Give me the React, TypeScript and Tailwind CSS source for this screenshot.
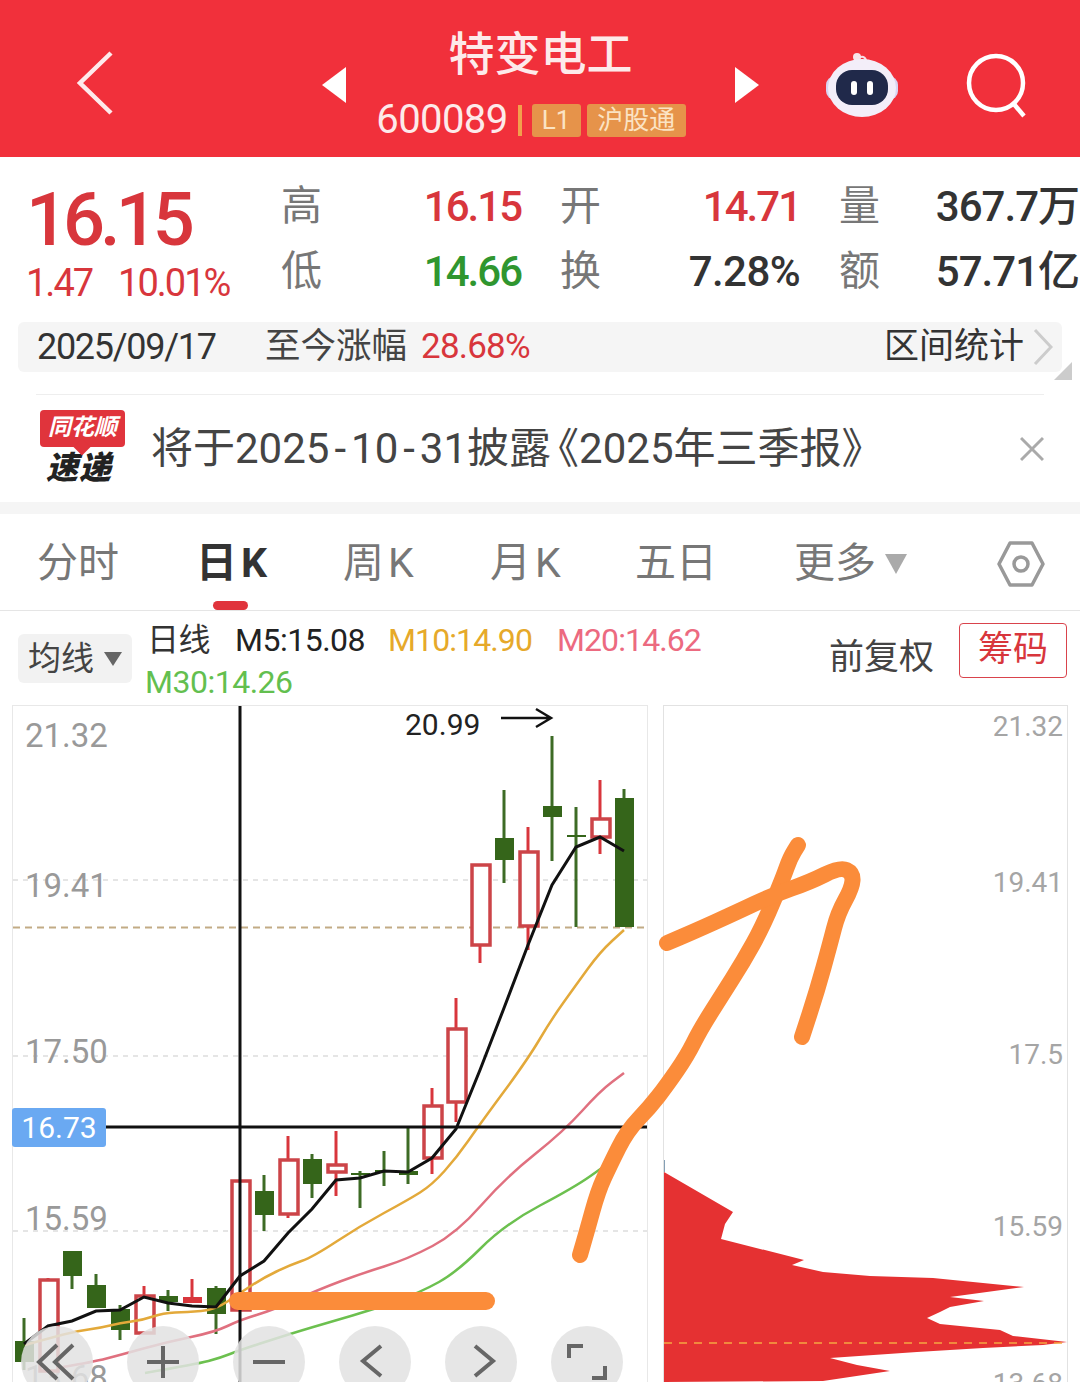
const RED = '#d8363c';
const GREEN = '#35651a';

// x, wick top, wick bottom, body top, body bottom, half width, kind
const candles: [number, number, number, number, number, number, 'g' | 'r' | 's'][] = [
  [24, 1318, 1370, 1341, 1362, 9, 'g'],
  [48, 1278, 1372, 1279, 1372, 9, 'r'],
  [72, 1251, 1289, 1251, 1276, 9, 'g'],
  [96, 1274, 1308, 1285, 1308, 9, 'g'],
  [120, 1305, 1340, 1309, 1330, 9, 'g'],
  [144, 1286, 1334, 1295, 1334, 9, 'r'],
  [168, 1290, 1311, 1296, 1302, 9, 'g'],
  [192, 1279, 1303, 1297, 1303, 9, 's'],
  [216, 1286, 1334, 1288, 1314, 9, 'g'],
  [240, 1180, 1311, 1180, 1311, 9, 'r'],
  [264, 1175, 1231, 1191, 1215, 9, 'g'],
  [288, 1136, 1218, 1159, 1215, 9, 'r'],
  [312, 1154, 1198, 1159, 1184, 9, 'g'],
  [336, 1131, 1196, 1164, 1173, 9, 'r'],
  [360, 1171, 1208, 1173, 1175, 9, 'g'],
  [384, 1151, 1186, 1170, 1172, 9, 'g'],
  [408, 1128, 1184, 1171, 1175, 9, 'g'],
  [432, 1088, 1174, 1105, 1159, 9, 'r'],
  [456, 998, 1122, 1028, 1103, 9, 'r'],
  [480, 864, 963, 864, 946, 9, 'r'],
  [504, 790, 883, 838, 860, 9, 'g'],
  [528, 827, 950, 851, 927, 9, 'r'],
  [552, 736, 861, 806, 817, 9, 'g'],
  [576, 807, 927, 835, 837, 9, 'g'],
  [600, 780, 854, 818, 838, 9, 'r'],
  [624, 789, 927, 798, 927, 9, 'g'],
];

const m5 = '24,1344 48,1326 72,1321 96,1311 120,1310 144,1297 168,1303 192,1306 216,1307 240,1276 264,1261 288,1233 312,1209 336,1180 360,1178 384,1171 408,1172 432,1158 456,1129 480,1070 504,1008 528,945 552,885 576,847 600,837 624,851';
const m10 = '25,1345 50,1338 77,1331 100,1328 120,1323 143,1320 163,1313 187,1312 215,1310 240,1293 263,1278 290,1265 313,1257 360,1226 408,1200 432,1185 457,1157 480,1124 528,1059 551,1020 576,985 600,952 624,930';
const m20 = '63,1367 93,1362 120,1355 167,1342 215,1332 240,1320 273,1310 320,1289 360,1274 408,1259 457,1233 505,1178 564,1131 600,1091 624,1073';
const m30 = '145,1373 197,1364 220,1358 240,1350 293,1333 330,1322 375,1309 421,1292 457,1272 505,1224 575,1187 606,1165';
const profile = '664,1172 733,1212 725,1224 721,1239 804,1260 792,1265 823,1272 870,1276 933,1278 1024,1287 950,1297 984,1301 950,1307 940,1312 927,1318 940,1324 1000,1330 1013,1336 1067,1342 1043,1345 983,1348 917,1352 830,1358 857,1365 890,1371 823,1381 664,1382';
const strokeB = '580,1255 587,1231 598,1191 610,1165 627,1131 650,1107 667,1085 687,1056 700,1030 722,995 743,962 763,926 783,878 790,858 798,845';
const strokeC = '667,943 693,932 737,912 773,895 810,882 840,867 853,873 852,888 838,913 830,944 817,991 802,1037';

// rounds a point list into a path through the midpoints
const smooth = (points: string) => {
  const p = points.split(' ').map((s) => s.split(',').map(Number));
  let d = `M${p[0][0]} ${p[0][1]}`;
  for (let i = 1; i < p.length - 1; i++) {
    d += ` Q${p[i][0]} ${p[i][1]} ${(p[i][0] + p[i + 1][0]) / 2} ${(p[i][1] + p[i + 1][1]) / 2}`;
  }
  const last = p[p.length - 1];
  return `${d} L${last[0]} ${last[1]}`;
};

const leftAxis: [string, number][] = [['21.32', 747], ['19.41', 897], ['17.50', 1063], ['15.59', 1230], ['13.68', 1389]];
const rightAxis: [string, number][] = [['21.32', 736], ['19.41', 892], ['17.5', 1064], ['15.59', 1236], ['13.68', 1393]];
const tabs: [string, string, string][] = [
  ['分时', 'w-[159px]', 'text-[#777]'],
  ['日K', 'w-[147px]', 'text-[#333] font-bold tracking-[4px]'],
  ['周K', 'w-[147px]', 'text-[#777] tracking-[4px]'],
  ['月K', 'w-[145px]', 'text-[#777] tracking-[4px]'],
  ['五日', 'w-[159px]', 'text-[#777]'],
];

const Header = () => (
  <header className="flex h-[157px] items-center bg-[#f1303b] pl-[76px] text-white">
    <svg width="38" height="66" viewBox="0 0 38 66" className="mt-[8px]">
      <path d="M35 3 4 33l31 30" fill="none" stroke="#fff" strokeWidth="4.5" opacity="0.9" />
    </svg>
    <svg width="24" height="36" viewBox="0 0 24 36" className="mt-[13px] ml-[208px]">
      <path d="M24 0v36L0 18z" fill="#fff" />
    </svg>
    <div className="flex w-[389px] flex-col items-center self-start pt-[29px]">
      <div className="text-[46px] leading-[50px] font-medium text-[#fdeaea]">特变电工</div>
      <div className="mt-[21px] mr-[19px] flex items-center">
        <span className="text-[40px] leading-[40px] tracking-[-0.6px] text-[#fdeaea]">600089</span>
        <span className="mx-[10px] h-[31px] w-[4px] bg-[#f2a04c]" />
        <span className="flex h-[33px] w-[49px] items-center justify-center rounded-[3px] bg-[#e6934a] text-[26px] text-[#fbe3c4]">L1</span>
        <span className="ml-[6px] flex h-[33px] w-[99px] items-center justify-center rounded-[3px] bg-[#e6934a] text-[26px] text-[#fbe3c4]">沪股通</span>
      </div>
    </div>
    <svg width="24" height="36" viewBox="0 0 24 36" className="mt-[13px]">
      <path d="M0 0v36l24-18z" fill="#fff" />
    </svg>
    <svg width="76" height="70" viewBox="0 0 76 70" className="mt-[12px] ml-[65px]">
      <path d="M35 8c4-3 8 0 7 6" fill="none" stroke="#f6dfe6" strokeWidth="2" />
      <circle cx="33" cy="7" r="4" fill="#f8e4ea" />
      <rect x="2" y="26" width="72" height="24" rx="9" fill="#d9d4f2" />
      <ellipse cx="38" cy="38" rx="34" ry="29" fill="#f3eef9" />
      <rect x="12" y="20" width="52" height="35" rx="16" fill="#20294a" />
      <rect x="27" y="31" width="6" height="14" rx="3" fill="#fff" />
      <rect x="43" y="31" width="6" height="14" rx="3" fill="#fff" />
    </svg>
    <svg width="64" height="66" viewBox="0 0 64 66" className="mt-[15px] ml-[66px]">
      <circle cx="30" cy="30" r="27" fill="none" stroke="#fff" strokeWidth="4.5" />
      <path d="m47 50 11 13" fill="none" stroke="#fff" strokeWidth="4.5" />
    </svg>
  </header>
);

const Cell = ({ label, value, color }: { label: string; value: string; color: string }) => (
  <div className="flex h-[65px] items-center justify-between whitespace-nowrap">
    <span className="text-[41px] text-[#777]">{label}</span>
    <span className={`text-[42px] font-medium ${color}`}>{value}</span>
  </div>
);

const Quote = () => (
  <section className="flex h-[165px] items-start pt-[17px]">
    <div className="w-[281px] pl-[26px] whitespace-nowrap text-[#d8363c]">
      <div className="h-[82px] pt-[2px] text-[74px] leading-[88px] font-medium tracking-[-5px]">16.15</div>
      <div className="mt-[7px] flex h-[40px] items-center text-[38px] tracking-[-2px]">
        <span>1.47</span>
        <span className="ml-[26px]">10.01%</span>
      </div>
    </div>
    <div className="grid grid-cols-[240px_240px_240px] gap-x-[39px]">
      <Cell label="高" value="16.15" color="text-[#d8363c] tracking-[-2px]" />
      <Cell label="开" value="14.71" color="text-[#d8363c] tracking-[-2px]" />
      <Cell label="量" value="367.7万" color="text-[#333] tracking-[-1px]" />
      <Cell label="低" value="14.66" color="text-[#2f962f] tracking-[-2px]" />
      <Cell label="换" value="7.28%" color="text-[#333] tracking-[-0.6px]" />
      <Cell label="额" value="57.71亿" color="text-[#333] tracking-[-1px]" />
    </div>
  </section>
);

const RangeBar = () => (
  <div className="relative mx-[18px] flex h-[50px] items-center rounded-[6px] bg-[#f5f5f5] pl-[19px] whitespace-nowrap">
    <span className="w-[228px] text-[36px] tracking-[-1.3px] text-[#333]">2025/09/17</span>
    <span className="text-[35.5px] text-[#444]">至今涨幅</span>
    <span className="ml-[14px] text-[35px] tracking-[-0.8px] text-[#d8363c]">28.68%</span>
    <span className="ml-auto text-[35px] text-[#333]">区间统计</span>
    <svg width="20" height="36" viewBox="0 0 20 36" className="mr-[9px] ml-[9px]">
      <path d="m2 1 16 17L2 35" fill="none" stroke="#ccc" strokeWidth="3" />
    </svg>
    <svg width="18" height="18" viewBox="0 0 18 18" className="absolute top-[40px] right-[-10px]">
      <path d="M18 0v18H0z" fill="#ccc" />
    </svg>
  </div>
);

const News = () => (
  <section className="flex h-[107px] items-center pr-[36px] pl-[37px]">
    <div className="flex w-[114px] flex-col items-start">
      <div className="relative ml-[3px] flex h-[37px] w-[85px] items-center justify-center rounded-[4px] bg-[#e0343c] text-[23px] font-bold text-white italic">
        同花顺
        <span className="absolute bottom-[-6px] left-[36px] h-[12px] w-[12px] rotate-45 bg-[#e0343c]" />
      </div>
      <div className="mt-[3px] ml-[9px] text-[32px] leading-[37px] font-black tracking-[1px] text-[#222] italic">速递</div>
    </div>
    <p className="text-[42px] whitespace-nowrap text-[#444]">
      将于2025<span className="px-[5px]">-</span>10<span className="px-[5px]">-</span>31披露<span className="-ml-[14px]">《</span>2025年三季报》
    </p>
    <svg width="24" height="26" viewBox="0 0 24 26" className="ml-auto">
      <path d="m1 2 22 22M23 2 1 24" stroke="#aaa" strokeWidth="3" />
    </svg>
  </section>
);

const Tabs = () => (
  <nav className="relative flex h-[97px] items-center border-b border-[#e5e5e5] pt-[4px] pl-[37px] text-[41px] whitespace-nowrap">
    {tabs.map(([label, width, color]) => (
      <span key={label} className={`${width} ${color}`}>{label}</span>
    ))}
    <span className="text-[41px] text-[#777]">更多</span>
    <svg width="22" height="20" viewBox="0 0 22 20" className="ml-[9px]">
      <path d="M0 0h22L11 20z" fill="#aaa" />
    </svg>
    <svg width="48" height="48" viewBox="0 0 48 48" className="ml-[90px]">
      <path d="M13 3h22l11 21-11 21H13L2 24z" fill="none" stroke="#999" strokeWidth="3.5" strokeLinejoin="round" />
      <circle cx="24" cy="24" r="7" fill="none" stroke="#999" strokeWidth="3.5" />
    </svg>
    <span className="absolute bottom-0 left-[213px] h-[9px] w-[35px] rounded-[5px] bg-[#e0343c]" />
  </nav>
);

const MaRow = () => (
  <section className="flex h-[94px] items-start whitespace-nowrap">
    <div className="mt-[23px] ml-[18px] flex h-[49px] w-[114px] items-center rounded-[6px] bg-[#f2f2f2] pl-[10px]">
      <span className="text-[33px] text-[#444]">均线</span>
      <svg width="18" height="14" viewBox="0 0 18 14" className="ml-[10px]">
        <path d="M0 0h18L9 14z" fill="#666" />
      </svg>
    </div>
    <div className="mt-[8px] ml-[15px] w-[614px] text-[32px] leading-[42px] tracking-[-0.5px]">
      <div className="flex">
        <span className="text-[#333]">日线</span>
        <span className="ml-[25px] text-[#222]">M5:15.08</span>
        <span className="ml-[23px] tracking-[-0.9px] text-[#e6a92a]">M10:14.90</span>
        <span className="ml-[25px] tracking-[-0.9px] text-[#ec6a80]">M20:14.62</span>
      </div>
      <div className="-ml-[2px] text-[#63bf4f]">M30:14.26</div>
    </div>
    <span className="mt-[21px] ml-[68px] text-[35px] text-[#444]">前复权</span>
    <button className="mt-[12px] ml-[25px] flex h-[55px] w-[108px] items-center justify-center rounded-[4px] border border-[#d9434c] text-[35px] text-[#d8363c]">筹码</button>
  </section>
);

const LeftChart = () => (
  <div className="h-[677px] w-[636px] border-x border-t border-[#e8e8e8]">
    <svg width="634" height="676" viewBox="13 706 634 676" className="block">
      {[880, 1056, 1231].map((y) => (
        <line key={y} x1="13" x2="647" y1={y} y2={y} stroke="#ddd" strokeWidth="1.5" strokeDasharray="5 5" />
      ))}
      <line x1="13" x2="647" y1="927.5" y2="927.5" stroke="#c2ab85" strokeWidth="2" strokeDasharray="7 5" />
      {leftAxis.map(([label, y]) => (
        <text key={label} x="25" y={y} fontSize="33" fill="#999">{label}</text>
      ))}
      {candles.map(([x, wt, wb, bt, bb, hw, kind]) => {
        const color = kind === 'g' ? GREEN : RED;
        return (
          <g key={x}>
            <line x1={x} x2={x} y1={wt} y2={wb} stroke={kind === 'g' ? '#3d6b25' : RED} strokeWidth="3" />
            {kind === 'r' ? (
              <rect x={x - hw + 1} y={bt + 1} width={hw * 2} height={bb - bt - 2} fill="#fff" stroke="#cc4448" strokeWidth="3.5" />
            ) : (
              <rect x={x - hw} y={bt} width={hw * 2 + 1} height={bb - bt} fill={color} />
            )}
          </g>
        );
      })}
      <path d={smooth(m30)} fill="none" stroke="#6cc04f" strokeWidth="2.5" />
      <path d={smooth(m20)} fill="none" stroke="#e0707f" strokeWidth="2.5" />
      <path d={smooth(m10)} fill="none" stroke="#e3a93a" strokeWidth="2.5" />
      <polyline points={m5} fill="none" stroke="#111" strokeWidth="3" />
      <line x1="240" x2="240" y1="706" y2="1382" stroke="#111" strokeWidth="3" />
      <line x1="106" x2="647" y1="1127" y2="1127" stroke="#111" strokeWidth="3" />
      <text x="405" y="735" fontSize="30" fill="#222">20.99</text>
      <path d="M501 718h50m-15-9 15 9-15 9" fill="none" stroke="#111" strokeWidth="2.5" />
    </svg>
  </div>
);

const RightChart = () => (
  <div className="h-[677px] w-[405px] border-x border-t border-[#e2e2e2]">
    <svg width="403" height="676" viewBox="664 706 403 676" className="block">
      <polygon points={profile} fill="#e53132" />
      <line x1="664" x2="664" y1="1160" y2="1172" stroke="#5b7f9c" strokeWidth="1.5" />
      <line x1="664" x2="1067" y1="1343" y2="1343" stroke="#f5a742" strokeWidth="1.5" strokeDasharray="8 7" />
      {rightAxis.map(([label, y]) => (
        <text key={label} x="1063" y={y} fontSize="28" fill="#a5a5a5" textAnchor="end">{label}</text>
      ))}
    </svg>
  </div>
);

const Scribble = () => (
  <svg width="1080" height="677" viewBox="0 705 1080 677" className="pointer-events-none absolute top-0 left-0">
    <g fill="none" stroke="#fb8c3a" strokeLinecap="round" strokeLinejoin="round">
      <path d="M238 1301H486" strokeWidth="18" />
      <path d={smooth(strokeB)} strokeWidth="16" />
      <path d={smooth(strokeC)} strokeWidth="16" />
    </g>
  </svg>
);

const ChartButtons = () => (
  <div className="absolute top-[621px] left-[21px] flex gap-[34px]">
    {[
      'M36 19 18 36l18 17M52 19 34 36l18 17',
      'M36 20v32M20 36h32',
      'M20 36h32',
      'M42 20 24 35l18 15',
      'M30 20l18 15-18 15',
      'M18 32V20h14M54 40v12H41',
    ].map((d) => (
      <div key={d} className="h-[72px] w-[72px] rounded-full bg-[#e2e2e2]/85">
        <svg width="72" height="72" viewBox="0 0 72 72">
          <path d={d} fill="none" stroke="#666" strokeWidth="4" />
        </svg>
      </div>
    ))}
  </div>
);

const App = () => {
  return (
    <div className="h-[1382px] w-[1080px] overflow-hidden bg-white font-['Roboto','Noto_Sans_CJK_SC',sans-serif]">
      <Header />
      <Quote />
      <RangeBar />
      <div className="mx-[36px] mt-[22px] h-px bg-[#eee]" />
      <News />
      <div className="h-[12px] bg-[#f5f5f5]" />
      <Tabs />
      <MaRow />
      <div className="relative flex gap-[15px] pl-[12px]">
        <LeftChart />
        <RightChart />
        <Scribble />
        <div className="absolute top-[403px] left-[12px] flex h-[39px] w-[94px] items-center justify-center rounded-[3px] bg-[#6aa9f2] text-[30px] text-white">16.73</div>
        <ChartButtons />
      </div>
    </div>
  );
};

export default App;
